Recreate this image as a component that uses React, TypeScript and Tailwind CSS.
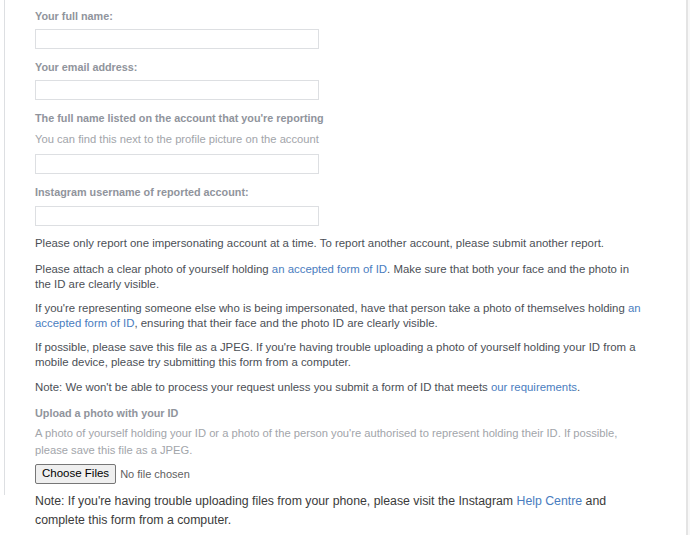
import React from "react";

const labelCls = "text-[10.8px] leading-[14px] font-bold text-[#90949c]";
const helpCls = "text-[11.2px] text-[#a2a5aa]";
const inputCls = "block w-[284px] h-[20px] border border-[#dddfe2] bg-white";
const pCls = "text-[11.4px] leading-[15px] text-[#4b4f56] w-[608px]";
const linkCls = "text-[#4a7dc0]";

export default function App() {
  return (
    <div
      className="w-[690px] h-[535px] bg-white flex overflow-hidden"
      style={{ fontFamily: '"Liberation Sans", Arial, sans-serif' }}
    >
      <div className="w-[686px] flex flex-col">
        <div className="ml-[4px] border-l border-[#dddfe2] pl-[30px] pt-[9px] pb-[11px]">
          <div className={labelCls}>Your full name:</div>
          <input className={`${inputCls} mt-[6px]`} />
          <div className={`${labelCls} mt-[11px]`}>Your email address:</div>
          <input className={`${inputCls} mt-[6px]`} />
          <div className={`${labelCls} mt-[11px]`}>
            The full name listed on the account that you're reporting
          </div>
          <div className={`${helpCls} leading-[14px] mt-[7px]`}>
            You can find this next to the profile picture on the account
          </div>
          <input className={`${inputCls} mt-[8px]`} />
          <div className={`${labelCls} mt-[11px]`}>
            Instagram username of reported account:
          </div>
          <input className={`${inputCls} mt-[7px]`} />

          <p className={`${pCls} mt-[10px]`}>
            Please only report one impersonating account at a time. To report
            another account, please submit another report.
          </p>
          <p className={`${pCls} mt-[11px]`}>
            Please attach a clear photo of yourself holding{" "}
            <a className={linkCls}>an accepted form of ID</a>. Make sure that
            both your face and the photo in the ID are clearly visible.
          </p>
          <p className={`${pCls} mt-[9px]`}>
            If you're representing someone else who is being impersonated,
            have that person take a photo of themselves holding{" "}
            <a className={linkCls}>an accepted form of ID</a>, ensuring that
            their face and the photo ID are clearly visible.
          </p>
          <p className={`${pCls} mt-[9px]`}>
            If possible, please save this file as a JPEG. If you're having
            trouble uploading a photo of yourself holding your ID from a mobile
            device, please try submitting this form from a computer.
          </p>
          <p className={`${pCls} mt-[10px]`}>
            Note: We won't be able to process your request unless you submit a
            form of ID that meets <a className={linkCls}>our requirements</a>.
          </p>

          <div className={`${labelCls} mt-[11px]`}>Upload a photo with your ID</div>
          <div className={`${helpCls} leading-[17px] mt-[5px] w-[608px]`}>
            A photo of yourself holding your ID or a photo of the person you're
            authorised to represent holding their ID. If possible, please save
            this file as a JPEG.
          </div>
          <div className="flex items-center mt-[5px] h-[20px]">
            <button className="h-[20px] px-[6px] text-[11.5px] leading-none text-black bg-[#efefef] border border-[#767676] rounded-[2px]">
              Choose Files
            </button>
            <span className="ml-[4px] text-[11px] text-[#5f5f5f]">No file chosen</span>
          </div>
        </div>
        <p className="-mt-[3px] pl-[35px] w-[650px] text-[12.3px] leading-[19px] text-[#3b3b3b]">
          Note: If you're having trouble uploading files from your phone,
          please visit the Instagram <a className={linkCls}>Help Centre</a> and
          complete this form from a computer.
        </p>
      </div>
      <div className="w-[2px] h-full bg-[#e4e4e4]" />
      <div className="w-[2px] h-full bg-[#f8f8f8]" />
    </div>
  );
}
